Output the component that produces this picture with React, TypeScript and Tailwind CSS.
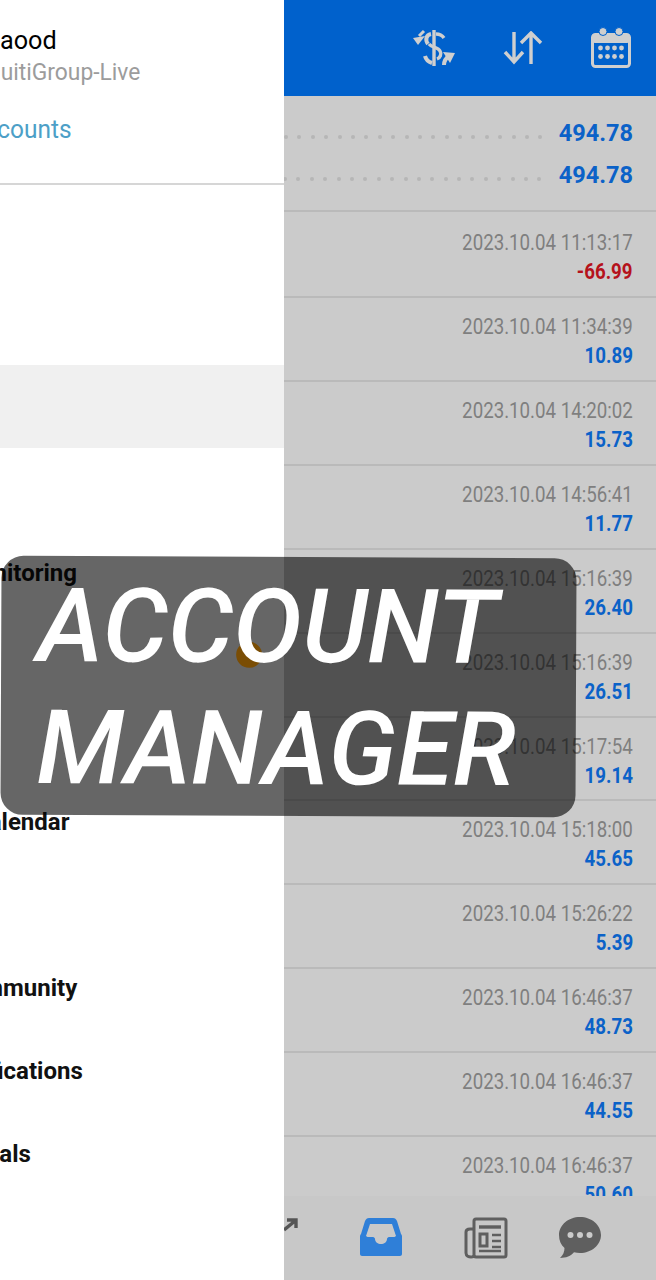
import React from "react";

const deals = [
  { date: "2023.10.04 11:13:17", value: "-66.99", loss: true, cls: "h-[86px] pt-[17px]" },
  { date: "2023.10.04 11:34:39", value: "10.89" },
  { date: "2023.10.04 14:20:02", value: "15.73" },
  { date: "2023.10.04 14:56:41", value: "11.77" },
  { date: "2023.10.04 15:16:39", value: "26.40" },
  { date: "2023.10.04 15:16:39", value: "26.51" },
  { date: "2023.10.04 15:17:54", value: "19.14", cls: "h-[83px] pt-[15px]" },
  { date: "2023.10.04 15:18:00", value: "45.65" },
  { date: "2023.10.04 15:26:22", value: "5.39" },
  { date: "2023.10.04 16:46:37", value: "48.73" },
  { date: "2023.10.04 16:46:37", value: "44.55" },
  { date: "2023.10.04 16:46:37", value: "50.60" },
];

const menu = [
  { label: "" },
  { label: "" },
  { label: "", active: true },
  { label: "" },
  { label: "Monitoring", cls: "-ml-[41px]" },
  { label: "" },
  { label: "" },
  { label: "Calendar", cls: "-ml-[27px]" },
  { label: "" },
  { label: "Community", cls: "-ml-[47px]" },
  { label: "Notifications", cls: "-ml-[56px]" },
  { label: "Signals", cls: "-ml-[49px]" },
];

const dots = Array.from({ length: 20 });

function Dots({ cls }: { cls: string }) {
  return (
    <div className={`flex gap-[9.4px] ${cls}`}>
      {dots.map((_, i) => (
        <span key={i} className="w-1 h-1 rounded-full bg-[#b6b6b6]" />
      ))}
    </div>
  );
}

function SwapIcon() {
  return (
    <svg width="44" height="38" viewBox="0 0 44 38" fill="none" stroke="#cfcfcf">
      <path d="M21 1v36" strokeWidth="3.4" />
      <path d="M15 15c-3-4-2-9 3-10" strokeWidth="4" />
      <path d="M31 9c-2-3-5-4-8-4" strokeWidth="3.4" />
      <path d="M16 15c3 4 9 3 11 7 2 3 0 7-3 8" strokeWidth="3.4" />
      <path d="M12 27c1 4 4 6 7 7" strokeWidth="4" />
      <path d="M0 9l5 7 7-9z" fill="#cfcfcf" stroke="none" />
      <path d="M11 2L6 7" strokeWidth="3" />
      <path d="M31 36c0-4 2-7 5-9" strokeWidth="4" />
      <path d="M30 23l12 1-5 10z" fill="#cfcfcf" stroke="none" />
    </svg>
  );
}

function SortIcon() {
  return (
    <svg width="40" height="34" viewBox="0 0 40 34" fill="none" stroke="#cfcfcf" strokeWidth="3.4">
      <path d="M11 1v30M2 21l9 10 9-10" />
      <path d="M28 33V2M18 12L28 2l10 10" />
    </svg>
  );
}

function CalendarIcon() {
  return (
    <svg width="40" height="42" viewBox="0 0 40 42">
      <rect x="1.5" y="7.5" width="37" height="32" rx="3" fill="none" stroke="#cfcfcf" strokeWidth="3" />
      <rect x="1" y="7" width="38" height="9" rx="3" fill="#cfcfcf" />
      <circle cx="12" cy="4.5" r="4" fill="#cfcfcf" stroke="#0061cc" strokeWidth="1" />
      <circle cx="28" cy="4.5" r="4" fill="#cfcfcf" stroke="#0061cc" strokeWidth="1" />
      {[9, 16, 23, 30].map((x) => (
        <React.Fragment key={x}>
          <circle cx={x + 0.5} cy="21" r="2.4" fill="#cfcfcf" />
          <circle cx={x + 0.5} cy="29.5" r="2.4" fill="#cfcfcf" />
        </React.Fragment>
      ))}
    </svg>
  );
}

function InboxIcon() {
  return (
    <svg width="42" height="38" viewBox="0 0 42 38">
      <path
        d="M9 0h24c2 0 3 1 4 3l4 13c1 1 1 2 1 3v17c0 1-1 2-2 2H2c-1 0-2-1-2-2V19c0-1 0-2 1-3L5 3c1-2 2-3 4-3z"
        fill="#2f7fd8"
      />
      <path
        d="M10 6h22l4 12c-1 1-2 1-3 1h-4c-1 0-2 1-2 2 0 3-3 5-6 5s-6-2-6-5c0-1-1-2-2-2H9c-1 0-2 0-3-1z"
        fill="#c9c9c9"
      />
    </svg>
  );
}

function NewsIcon() {
  return (
    <svg width="44" height="42" viewBox="0 0 44 42" fill="none" stroke="#5f5f5f" strokeWidth="3">
      <rect x="10" y="2" width="32" height="38" rx="2" />
      <path d="M10 38c0 1-1 2-3 2s-5-1-5-4V15c0-2 2-3 4-3h4" />
      <path d="M15 10h22" strokeWidth="3.4" />
      <rect x="16" y="17" width="7" height="12" strokeWidth="3" />
      <path d="M28 18h9M28 24h9M28 30h9M15 34h22" strokeWidth="2.6" />
    </svg>
  );
}

function ChatIcon() {
  return (
    <svg width="42" height="42" viewBox="0 0 42 42">
      <path
        d="M21 0c11.500 0 21 8 21 18S32.500 36 21 36c-2 0-4-.2-6-.7C12 39 7 41 1 41c3-3 4.500-6 4.500-10C2 28 0 23.500 0 18 0 8 9.500 0 21 0z"
        fill="#5f5f5f"
      />
      <circle cx="11.500" cy="18" r="3" fill="#cbcbcb" />
      <circle cx="21" cy="18" r="3" fill="#cbcbcb" />
      <circle cx="30.500" cy="18" r="3" fill="#cbcbcb" />
    </svg>
  );
}

export default function App() {
  return (
    <div className="relative w-[656px] h-[1280px] overflow-hidden flex bg-[#cbcbcb] font-['Roboto',sans-serif]">
      <aside className="w-[284px] shrink-0 bg-white overflow-hidden">
        <div className="h-[185px] border-b-2 border-[#d6d6d6] overflow-hidden whitespace-nowrap pt-[24px]">
          <div className="-ml-[159px] text-[26px] leading-[32px] text-black origin-left scale-x-[0.97]">Mohammad Daood</div>
          <div className="-ml-[25px] text-[24px] leading-[32px] text-[#9c9c9c] origin-left scale-x-[0.95]">EquitiGroup-Live</div>
          <div className="-ml-[123px] mt-[25px] text-[26px] leading-[32px] text-[#4d9fc7] origin-left scale-x-[0.94]">Manage accounts</div>
        </div>
        <div className="pt-[14px]">
          {menu.map((m, i) => (
            <div
              key={i}
              className={`h-[83px] pt-[1px] flex items-center whitespace-nowrap ${m.active ? "bg-[#f0f0f0]" : ""}`}
            >
              <span className={`text-[24px] font-bold text-[#111] ${m.cls ?? ""}`}>
                {m.label}
              </span>
            </div>
          ))}
        </div>
      </aside>

      <main className="flex-1 min-w-0 flex flex-col">
        <header className="h-[96px] shrink-0 bg-[#0061cc] flex items-center justify-end pr-[25px]">
          <SwapIcon />
          <div className="ml-[46px]">
            <SortIcon />
          </div>
          <div className="ml-[48px]">
            <CalendarIcon />
          </div>
        </header>

        <div className="flex-1 min-h-0 overflow-hidden">
          <div className="h-[116px] border-b-2 border-[#bababa] pr-[23px] pt-[17px] overflow-hidden">
            <div className="h-[42px] flex items-center justify-between">
              <Dots cls="mt-[6px] ml-[0px]" />
              <span className="text-[23.5px] font-bold text-[#0b62c8]">494.78</span>
            </div>
            <div className="h-[42px] flex items-center justify-between">
              <Dots cls="mt-[6px] -ml-[1px]" />
              <span className="text-[23.5px] font-bold text-[#0b62c8]">494.78</span>
            </div>
          </div>
          {deals.map((d, i) => (
            <div
              key={i}
              className={`border-b-2 border-[#bababa] pr-[23px] flex flex-col items-end ${d.cls ?? "h-[84px] pt-[15px]"}`}
            >
              <div className="text-[22px] leading-[28px] text-[#7f7f7f] whitespace-nowrap origin-right scale-x-[0.85]">
                {d.date}
              </div>
              <div
                className={`text-[22px] leading-[30px] font-bold origin-right scale-x-[0.85] ${d.loss ? "text-[#b5121b]" : "text-[#0b62c8]"}`}
              >
                {d.value}
              </div>
            </div>
          ))}
        </div>

        <nav className="h-[84px] shrink-0 bg-[#c8c8c8] flex items-start relative">
          <svg className="absolute left-0 top-[22px]" width="14" height="14" viewBox="0 0 14 14" fill="none" stroke="#555" strokeWidth="3.4">
            <path d="M0 12L11 3M3 2h9v8" />
          </svg>
          <div className="ml-[76px] mt-[21px] flex items-start">
            <div className="mt-[1px]">
              <InboxIcon />
            </div>
            <div className="ml-[62px]">
              <NewsIcon />
            </div>
            <div className="ml-[51px]">
              <ChatIcon />
            </div>
          </div>
        </nav>
      </main>

      <div className="absolute left-[1px] top-[557px] w-[575px] h-[259px] rounded-[22px] bg-black/60 rotate-[0.25deg] pt-[9px] pl-[36px]">
        <span className="absolute left-[235px] top-[85px] w-[26px] h-[26px] rounded-full bg-[#7a4d04]" />
        <div className="relative text-[103px] leading-[122px] font-medium italic text-white whitespace-nowrap">ACCOUNT</div>
        <div className="relative text-[103px] leading-[122px] font-medium italic text-white whitespace-nowrap">MANAGER</div>
      </div>
    </div>
  );
}
